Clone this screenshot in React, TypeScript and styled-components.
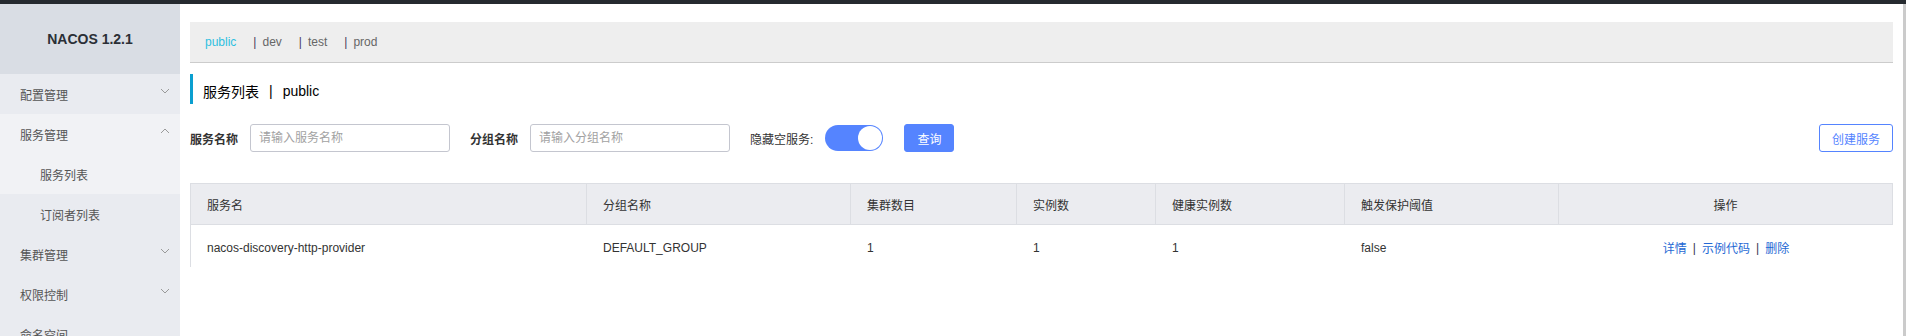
import styled, { createGlobalStyle } from "styled-components";

const GlobalStyle = createGlobalStyle`
  html, body {
    margin: 0;
    padding: 0;
    background: #fff;
  }
  body {
    font-family: "Liberation Sans", Arial, "Noto Sans CJK SC", sans-serif;
    font-size: 12px;
    color: #333;
  }
  * {
    box-sizing: border-box;
  }
`;

const Page = styled.div`
  width: 1906px;
  height: 336px;
  overflow: hidden;
  display: flex;
  flex-direction: column;
`;

const TopBar = styled.div`
  height: 4px;
  background: #252a2f;
  flex-shrink: 0;
`;

const Body = styled.div`
  flex: 1;
  display: flex;
  min-height: 0;
`;

const Sidebar = styled.aside`
  width: 180px;
  flex-shrink: 0;
  background: #e9ebf0;
  display: flex;
  flex-direction: column;
`;

const Brand = styled.div`
  height: 70px;
  background: #d9dde4;
  display: flex;
  align-items: center;
  justify-content: center;
  font-size: 14px;
  font-weight: bold;
  color: #2b2f36;
  flex-shrink: 0;
`;

const MenuItem = styled.div<{ $sub?: boolean; $light?: boolean }>`
  height: 40px;
  flex-shrink: 0;
  display: flex;
  align-items: center;
  justify-content: space-between;
  padding: 0 10px 0 ${(p) => (p.$sub ? "40px" : "20px")};
  background: ${(p) => (p.$light ? "#f1f2f5" : "transparent")};
  color: #555;
  font-size: 12px;
`;

const Chevron = styled.svg`
  width: 10px;
  height: 6px;
  margin-top: -6px;
`;

const Main = styled.main`
  flex: 1;
  padding: 18px 10px 0 10px;
  border-right: 3px solid #cbcbcb;
  display: flex;
  flex-direction: column;
  min-width: 0;
`;

const NamespaceBar = styled.div`
  height: 41px;
  background: #eeeeee;
  border-bottom: 1px solid #cccccc;
  display: flex;
  align-items: center;
  padding-left: 15px;
  font-size: 12px;
`;

const NsItem = styled.span<{ $active?: boolean }>`
  color: ${(p) => (p.$active ? "#2fc0e0" : "#666")};
  margin-right: 17px;
`;

const NsSep = styled.span`
  color: #4a3b5c;
  margin-right: 6px;
`;

const PageTitle = styled.div`
  margin-top: 11px;
  height: 30px;
  border-left: 3px solid #0a9fd0;
  padding-left: 10px;
  display: flex;
  align-items: center;
  padding-top: 3px;
  font-size: 14px;
  color: #000;
`;

const TitleSep = styled.span`
  margin: 0 10px;
`;

const SearchRow = styled.div`
  margin-top: 20px;
  height: 28px;
  display: flex;
  align-items: center;
`;

const Label = styled.span<{ $bold?: boolean }>`
  font-size: 12px;
  font-weight: ${(p) => (p.$bold ? "bold" : "normal")};
  color: #333;
  margin-right: 12px;
`;

const Input = styled.input`
  width: 200px;
  height: 28px;
  border: 1px solid #c4c6cf;
  border-radius: 3px;
  padding: 0 8px;
  font-size: 12px;
  font-family: inherit;
  margin-right: 20px;
  outline: none;
  &::placeholder {
    color: #a2a2a2;
  }
`;

const Switch = styled.div<{ $on?: boolean }>`
  width: 58px;
  height: 26px;
  border-radius: 13px;
  background: ${(p) => (p.$on ? "#5584ff" : "#d0d3d9")};
  padding: 1px;
  display: flex;
  justify-content: ${(p) => (p.$on ? "flex-end" : "flex-start")};
  margin-right: 21px;
`;

const Knob = styled.div`
  width: 24px;
  height: 24px;
  border-radius: 50%;
  background: #fff;
`;

const Button = styled.button<{ $primary?: boolean }>`
  height: 28px;
  padding: 0 12px;
  border-radius: 3px;
  border: 1px solid #5584ff;
  background: ${(p) => (p.$primary ? "#5584ff" : "#fff")};
  color: ${(p) => (p.$primary ? "#fff" : "#5584ff")};
  font-size: 12px;
  font-family: inherit;
  cursor: pointer;
`;

const Spacer = styled.div`
  flex: 1;
`;

const cols = "396px 264px 166px 139px 189px 214px 1fr";

const Table = styled.div`
  margin-top: 31px;
  display: flex;
  flex-direction: column;
`;

const HeadRow = styled.div`
  display: grid;
  grid-template-columns: ${cols};
  height: 42px;
  background: #ebecf0;
  border: 1px solid #dcdee3;
`;

const HeadCell = styled.div<{ $center?: boolean }>`
  display: flex;
  align-items: center;
  justify-content: ${(p) => (p.$center ? "center" : "flex-start")};
  padding-left: ${(p) => (p.$center ? "0" : "16px")};
  border-right: 1px solid #dcdee3;
  color: #333;
  &:last-child {
    border-right: none;
  }
`;

const BodyRow = styled.div`
  display: grid;
  grid-template-columns: ${cols};
  height: 42px;
  padding-top: 3px;
  border-left: 1px solid #dcdee3;
`;

const Cell = styled.div<{ $center?: boolean }>`
  display: flex;
  align-items: center;
  justify-content: ${(p) => (p.$center ? "center" : "flex-start")};
  padding-left: ${(p) => (p.$center ? "0" : "16px")};
  color: #333;
`;

const Link = styled.a`
  color: #2468d4;
  text-decoration: none;
  cursor: pointer;
`;

const LinkSep = styled.span`
  color: #3a3550;
  margin: 0 6px;
`;

function ChevronIcon({ up }: { up?: boolean }) {
  return (
    <Chevron viewBox="0 0 10 6">
      <polyline
        points={up ? "1,5 5,1 9,5" : "1,1 5,5 9,1"}
        fill="none"
        stroke="#9a9a9a"
        strokeWidth="1"
      />
    </Chevron>
  );
}

const menu = [
  { label: "配置管理", chevron: "down" },
  { label: "服务管理", chevron: "up", light: true },
  { label: "服务列表", sub: true, light: true },
  { label: "订阅者列表", sub: true },
  { label: "集群管理", chevron: "down" },
  { label: "权限控制", chevron: "down" },
  { label: "命名空间" },
];

const headers = ["服务名", "分组名称", "集群数目", "实例数", "健康实例数", "触发保护阈值"];

const services = [
  {
    name: "nacos-discovery-http-provider",
    group: "DEFAULT_GROUP",
    clusters: 1,
    instances: 1,
    healthy: 1,
    threshold: "false",
  },
];

export default function App() {
  return (
    <Page>
      <GlobalStyle />
      <TopBar />
      <Body>
        <Sidebar>
          <Brand>NACOS 1.2.1</Brand>
          {menu.map((m) => (
            <MenuItem key={m.label} $sub={m.sub} $light={m.light}>
              <span>{m.label}</span>
              {m.chevron && <ChevronIcon up={m.chevron === "up"} />}
            </MenuItem>
          ))}
        </Sidebar>
        <Main>
          <NamespaceBar>
            <NsItem $active>public</NsItem>
            <NsSep>|</NsSep>
            <NsItem>dev</NsItem>
            <NsSep>|</NsSep>
            <NsItem>test</NsItem>
            <NsSep>|</NsSep>
            <NsItem>prod</NsItem>
          </NamespaceBar>
          <PageTitle>
            服务列表<TitleSep>|</TitleSep>public
          </PageTitle>
          <SearchRow>
            <Label $bold>服务名称</Label>
            <Input placeholder="请输入服务名称" />
            <Label $bold>分组名称</Label>
            <Input placeholder="请输入分组名称" />
            <Label>隐藏空服务:</Label>
            <Switch $on>
              <Knob />
            </Switch>
            <Button $primary>查询</Button>
            <Spacer />
            <Button>创建服务</Button>
          </SearchRow>
          <Table>
            <HeadRow>
              {headers.map((h) => (
                <HeadCell key={h}>{h}</HeadCell>
              ))}
              <HeadCell $center>操作</HeadCell>
            </HeadRow>
            {services.map((s) => (
              <BodyRow key={s.name}>
                <Cell>{s.name}</Cell>
                <Cell>{s.group}</Cell>
                <Cell>{s.clusters}</Cell>
                <Cell>{s.instances}</Cell>
                <Cell>{s.healthy}</Cell>
                <Cell>{s.threshold}</Cell>
                <Cell $center>
                  <Link>详情</Link>
                  <LinkSep>|</LinkSep>
                  <Link>示例代码</Link>
                  <LinkSep>|</LinkSep>
                  <Link>删除</Link>
                </Cell>
              </BodyRow>
            ))}
          </Table>
        </Main>
      </Body>
    </Page>
  );
}
